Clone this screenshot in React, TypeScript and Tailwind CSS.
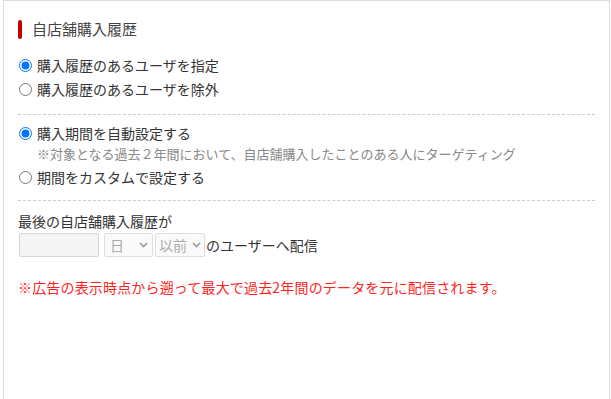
import React from "react";

function Chevron() {
  return (
    <svg width="9" height="6" viewBox="0 0 9 6" className="shrink-0">
      <path d="M1 1 L4.5 4.5 L8 1" fill="none" stroke="#999" strokeWidth="1.6" />
    </svg>
  );
}

function Radio({ checked, label }: { checked?: boolean; label: string }) {
  return (
    <label className="flex items-center h-[24px] gap-[5px] text-[14px] text-[#333]">
      <input
        type="radio"
        defaultChecked={checked}
        name={label}
        className="m-0 ml-[1px] w-[13px] h-[13px] shrink-0"
      />
      <span>{label}</span>
    </label>
  );
}

export default function App() {
  return (
    <div
      className="ml-[3px] w-[607px] h-[399px] border-x border-t border-[#dcdcdc] bg-white pl-[14px] pr-[14px] pt-[18px]"
      style={{ fontFamily: '"Noto Sans CJK JP", "Noto Sans", sans-serif' }}
    >
      <div className="flex items-center h-[20px]">
        <div className="w-[4px] h-[19px] rounded-[2px] bg-[#c40000]" />
        <div className="ml-[10px] text-[15px] text-[#444] leading-[20px]">自店舗購入履歴</div>
      </div>

      <div className="mt-[14px]">
        <Radio checked label="購入履歴のあるユーザを指定" />
        <Radio label="購入履歴のあるユーザを除外" />
      </div>

      <div className="mt-[13px] border-t border-dashed border-[#ccc]" />

      <div className="mt-[6px]">
        <Radio checked label="購入期間を自動設定する" />
        <div className="h-[18px] leading-[18px] pl-[19px] text-[13px] text-[#888]">
          ※対象となる過去２年間において、自店舗購入したことのある人にターゲティング
        </div>
        <div className="mt-[2px]">
          <Radio label="期間をカスタムで設定する" />
        </div>
      </div>

      <div className="mt-[11px] border-t border-dashed border-[#ccc]" />

      <div className="mt-[10px] h-[20px] leading-[20px] text-[14px] text-[#333]">最後の自店舗購入履歴が</div>

      <div className="mt-[2px] flex items-center h-[24px] text-[14px] text-[#333]">
        <div className="ml-[1px] w-[80px] h-[24px] border border-[#d5d5d5] rounded-[2px] bg-[#f5f5f5]" />
        <div className="ml-[5px] w-[49px] h-[24px] border border-[#dedede] rounded-[2px] bg-[#fafafa] flex items-center justify-between pl-[5px] pr-[4px] text-[#aaa]">
          <span>日</span>
          <Chevron />
        </div>
        <div className="ml-[2px] w-[50px] h-[24px] border border-[#dedede] rounded-[2px] bg-[#fafafa] flex items-center justify-between pl-[3px] pr-[3px] text-[#aaa]">
          <span>以前</span>
          <Chevron />
        </div>
        <span className="ml-[1px]">のユーザーへ配信</span>
      </div>

      <div className="mt-[20px] h-[20px] leading-[20px] text-[14px] tracking-[0.17px] text-[#ff1f1f]">
        ※広告の表示時点から遡って最大で過去2年間のデータを元に配信されます。
      </div>
    </div>
  );
}
